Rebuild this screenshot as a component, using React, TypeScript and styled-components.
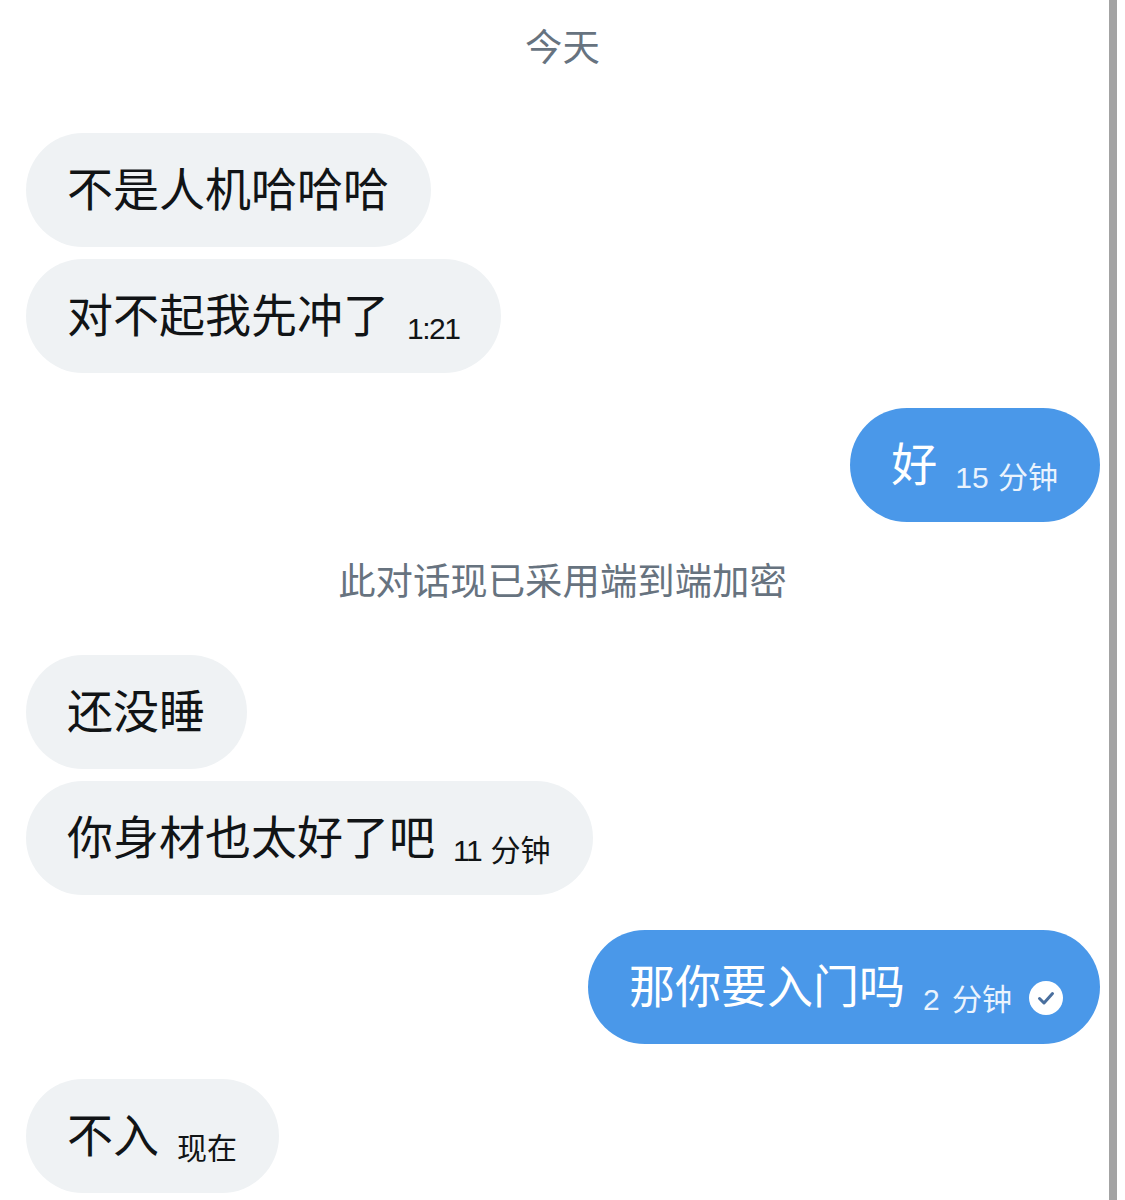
import React from "react";
import styled, { createGlobalStyle } from "styled-components";

const GlobalStyle = createGlobalStyle`
  html, body {
    margin: 0;
    padding: 0;
    background: #fff;
    overflow: hidden;
  }
  body {
    font-family: "Liberation Sans", "Noto Sans CJK SC", sans-serif;
  }
`;

const Page = styled.div`
  display: flex;
  width: 1125px;
  height: 1200px;
  overflow: hidden;
  background: #fff;
`;

const Chat = styled.main`
  box-sizing: border-box;
  width: 1109px;
  padding: 0 9px 0 26px;
  display: flex;
  flex-direction: column;
`;

const ScrollEdge = styled.div`
  width: 8px;
  height: 100%;
  background: #a3a3a3;
`;

const Notice = styled.div<{ $top: number; $bottom: number }>`
  height: 46px;
  line-height: 46px;
  margin: ${(p) => p.$top}px 0 ${(p) => p.$bottom}px;
  text-align: center;
  font-size: 37.4px;
  color: #67737f;
  white-space: nowrap;
  transform: translate(-0.5px, 2px);
`;

const Row = styled.div<{ $mine?: boolean; $gap: number }>`
  display: flex;
  justify-content: ${(p) => (p.$mine ? "flex-end" : "flex-start")};
  margin-bottom: ${(p) => p.$gap}px;
`;

const Bubble = styled.div<{ $mine?: boolean }>`
  box-sizing: border-box;
  height: 114px;
  border-radius: 57px;
  padding: 0 42px 0 41px;
  display: flex;
  align-items: center;
  background: ${(p) => (p.$mine ? "#4a98e9" : "#eff2f4")};
  color: ${(p) => (p.$mine ? "#fff" : "#111416")};
`;

const Body = styled.span`
  font-size: 46px;
  line-height: 54px;
  white-space: nowrap;
`;

const Time = styled.span<{ $mine?: boolean }>`
  margin-left: 18px;
  align-self: flex-end;
  margin-bottom: 26px;
  font-size: 30px;
  line-height: 36px;
  word-spacing: 1px;
  white-space: nowrap;
  color: ${(p) => (p.$mine ? "#eaf3fd" : "#111416")};
`;

const Digits = styled.span<{ $spacing?: number }>`
  letter-spacing: ${(p) => p.$spacing ?? 0}px;
`;

const Seen = styled.svg`
  flex: none;
  width: 34px;
  height: 34px;
  margin: 0 -5px 0 17px;
  transform: translateY(11px);
`;

function SeenIcon() {
  return (
    <Seen viewBox="0 0 34 34">
      <circle cx="17" cy="17" r="17" fill="#fff" />
      <path
        d="M10.5 17.5 L15 22 L23.5 12.5"
        fill="none"
        stroke="#4a6f9e"
        strokeWidth="3"
        strokeLinecap="round"
        strokeLinejoin="round"
      />
    </Seen>
  );
}

export default function App() {
  return (
    <Page>
      <GlobalStyle />
      <Chat>
        <Notice $top={23} $bottom={64}>今天</Notice>
        <Row $gap={12}>
          <Bubble><Body>不是人机哈哈哈</Body></Bubble>
        </Row>
        <Row $gap={35}>
          <Bubble>
            <Body>对不起我先冲了</Body>
            <Time><Digits $spacing={-1.5}>1:21</Digits></Time>
          </Bubble>
        </Row>
        <Row $mine $gap={35}>
          <Bubble $mine>
            <Body>好</Body>
            <Time $mine><Digits>15</Digits> 分钟</Time>
          </Bubble>
        </Row>
        <Notice $top={0} $bottom={52}>此对话现已采用端到端加密</Notice>
        <Row $gap={12}>
          <Bubble><Body>还没睡</Body></Bubble>
        </Row>
        <Row $gap={35}>
          <Bubble>
            <Body>你身材也太好了吧</Body>
            <Time><Digits $spacing={-1.5}>11</Digits> 分钟</Time>
          </Bubble>
        </Row>
        <Row $mine $gap={35}>
          <Bubble $mine>
            <Body>那你要入门吗</Body>
            <Time $mine><Digits $spacing={3}>2</Digits> 分钟</Time>
            <SeenIcon />
          </Bubble>
        </Row>
        <Row $gap={0}>
          <Bubble>
            <Body>不入</Body>
            <Time>现在</Time>
          </Bubble>
        </Row>
      </Chat>
      <ScrollEdge />
    </Page>
  );
}
